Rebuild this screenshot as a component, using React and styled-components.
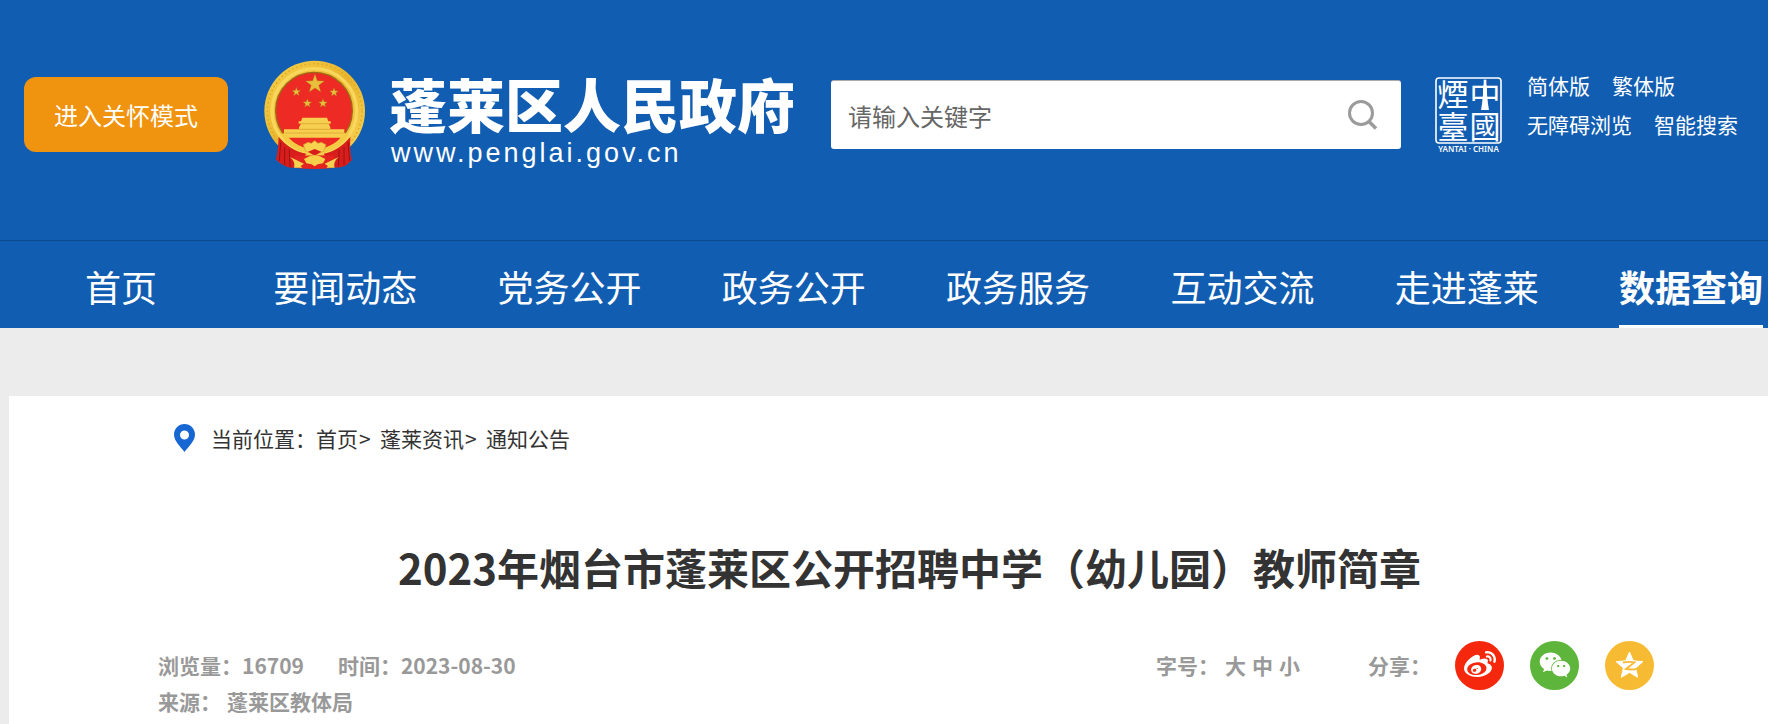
import React from "react";
import styled, { createGlobalStyle } from "styled-components";
import { FaWeibo, FaWeixin } from "react-icons/fa";

const GlobalStyle = createGlobalStyle`
  * { box-sizing: border-box; }
  body {
    margin: 0;
    background: #ececec;
    color: #333;
    font-family: "Noto Sans CJK SC", sans-serif;
  }
  a { color: inherit; text-decoration: none; }
  button, input { font: inherit; border: 0; margin: 0; }
  button { cursor: pointer; }
`;

const Page = styled.div`
  min-height: 100vh;
  display: flex;
  flex-direction: column;
  overflow-x: hidden;
`;

const Header = styled.header`
  height: 240px;
  padding: 0 30px 11px 24px;
  display: flex;
  align-items: center;
  background: #115db2;
  color: #fff;
`;

const CareButton = styled.button`
  flex: none;
  width: 204px;
  height: 75px;
  border-radius: 12px;
  background: #f0930f;
  color: #fff;
  font-size: 24px;
`;

const Brand = styled.a`
  flex: none;
  display: flex;
  align-items: center;
  gap: 23px;
  margin: 0 36px 0 36px;
`;

const BrandText = styled.span`
  display: flex;
  flex-direction: column;
  padding-top: 8px;
`;

const SiteName = styled.span`
  font-size: 58px;
  line-height: 68px;
  font-weight: 900;
`;

const SiteUrl = styled.span`
  padding-left: 2px;
  font-family: "Liberation Sans", sans-serif;
  font-size: 27px;
  line-height: 32px;
  letter-spacing: 3px;
`;

const Search = styled.form`
  flex: 1;
  min-width: 0;
  height: 69px;
  display: flex;
  align-items: center;
  padding: 0 20px 0 17px;
  border-top: 1px solid #aaa;
  border-radius: 3px;
  background: #fff;
`;

const SearchInput = styled.input`
  flex: 1;
  min-width: 0;
  height: 60px;
  padding: 0;
  outline: none;
  background: transparent;
  font-size: 24px;
  color: #666;
  &::placeholder { color: #666; opacity: 1; }
`;

const SearchButton = styled.button`
  display: flex;
  padding: 2px;
  background: transparent;
`;

const Seal = styled.svg`
  flex: none;
  margin: 0 25px 0 34px;
`;

const Tools = styled.nav`
  flex: none;
  display: grid;
  row-gap: 9px;
  padding-bottom: 20px;
  font-size: 21px;
  line-height: 30px;
`;

const ToolRow = styled.div`
  display: flex;
  gap: 22px;
`;

const MainNav = styled.nav`
  height: 88px;
  padding: 0 5px 0 49px;
  display: flex;
  justify-content: space-between;
  border-top: 1px solid #0d4a8e;
  background: #115db2;
`;

const NavLink = styled.a`
  min-width: 144px;
  padding-top: 8px;
  border-bottom: 3px solid ${(p) => (p.$active ? "#fff" : "transparent")};
  color: #fff;
  font-size: 36px;
  line-height: 74px;
  font-weight: ${(p) => (p.$active ? 700 : 400)};
  text-align: center;
  white-space: nowrap;
`;

const Article = styled.main`
  flex: 1;
  margin: 68px 0 0 9px;
  padding: 28px 107px 4px 149px;
  background: #fff;
`;

const Breadcrumb = styled.nav`
  height: 28px;
  padding-left: 16px;
  display: flex;
  align-items: center;
  font-size: 21px;
  line-height: 28px;
  svg { margin-right: 16px; }
`;

const Separator = styled.span`
  width: 22px;
  padding-left: 1px;
`;

const Title = styled.h1`
  margin: 85px 0 44px;
  font-size: 42px;
  line-height: 60px;
  font-weight: 700;
  text-align: center;
`;

const Meta = styled.div`
  display: flex;
  justify-content: space-between;
  padding-right: 7px;
  color: #999;
  font-size: 21px;
  line-height: 36px;
  font-weight: 700;
`;

const Facts = styled.div`
  padding-top: 6px;
`;

const FactRow = styled.div`
  display: flex;
  gap: ${(p) => p.$gap}px;
`;

const Actions = styled.div`
  display: flex;
  align-items: center;
  height: 48px;
`;

const Sizes = styled.div`
  display: flex;
  gap: 6px;
  margin: 0 68px 0 6px;
`;

const SizeButton = styled.button`
  padding: 0;
  background: transparent;
  color: inherit;
`;

const Shares = styled.div`
  display: flex;
  gap: 26px;
  margin-left: 24px;
`;

const ShareLink = styled.a`
  width: 49px;
  height: 49px;
  display: flex;
  align-items: center;
  justify-content: center;
  border-radius: 50%;
  background: ${(p) => p.$color};
  color: #fff;
`;

const star = (cx, cy, r, k = 0.4) =>
  Array.from({ length: 10 }, (_, i) => {
    const a = (Math.PI * i) / 5 - Math.PI / 2;
    const d = i % 2 ? r * k : r;
    return `${(cx + d * Math.cos(a)).toFixed(1)},${(cy + d * Math.sin(a)).toFixed(1)}`;
  }).join(" ");

function Emblem() {
  return (
    <svg width="102" height="110" viewBox="42 31 306 330" role="img" aria-label="国徽">
      <defs>
        <linearGradient id="gold" x1="0" y1="0" x2="1" y2="1">
          <stop offset="0" stopColor="#f7d24c" />
          <stop offset=".5" stopColor="#e9b52c" />
          <stop offset="1" stopColor="#f8d75a" />
        </linearGradient>
      </defs>
      <circle cx="194" cy="184" r="151" fill="url(#gold)" />
      <circle cx="194" cy="184" r="142" fill="none" stroke="#dfa62c" strokeWidth="4" strokeDasharray="5 8" />
      <circle cx="193" cy="184" r="127" fill="none" stroke="#f9d75c" strokeWidth="10" />
      <circle cx="192" cy="183" r="115" fill="#ee2a24" stroke="#9d6718" strokeWidth="4" />
      <g fill="#e8bf3a" stroke="#a86b1a" strokeWidth="1">
        <polygon points={star(195, 103, 30)} />
        <polygon points={star(139, 127, 14)} />
        <polygon points={star(252, 128, 14)} />
        <polygon points={star(172, 161, 14)} />
        <polygon points={star(219, 161, 14)} />
      </g>
      <g fill="#f6cf4e">
        <path d="M157 204h74l4 11h7v7h-6l5 11v6h42v25H102v-25h45v-6l6-11h-7v-7h7z" />
        <path d="M147 222h94M144 239h99M104 250h178" stroke="#d99a2c" strokeWidth="2" />
      </g>
      <path d="M106 265h176c-8 16-22 26-40 33l-48 12-50-13c-18-8-30-18-38-32z" fill="#ed2923" />
      <path d="M86 262c22 26 48 44 83 50l-30 41c-20 4-30-2-44-9l-17-14c5-23 7-44 8-68zM301 262c-22 26-47 44-80 50l28 41c20 2 31-2 42-8l14-13c-5-25-5-47-4-70z" fill="#d81e1c" />
      <path d="M92 278l-4 56M104 292l0 54M118 300l2 52M294 278l5 56M282 292l0 54M268 300l-3 50" stroke="#9c1115" strokeWidth="3" />
      <path d="M133 318l120-1-4 38c-38 4-76 4-110 0z" fill="#e3231f" />
      <path d="M92 254c18 32 46 50 84 58l18 4 18-4c38-8 68-26 84-58l-14-4c-18 28-42 42-76 48l-12 5-12-5c-34-6-58-20-76-48z" fill="#f5cb43" />
      <path d="M160 285l14-7 10 3 10-8 10 8 10-3 14 7-7 20-27 9-27-9z" fill="#f8d24f" stroke="#d19b2d" strokeWidth="2" />
      <path d="M174 306l20-8 20 8-20 12z" fill="#d81e1c" />
      <path d="M162 328l16-8 16-4 16 4 16 8-7 13-16 3-9 6-9-6-16-3z" fill="#f7cf49" />
      <path d="M120 322l42 20-10 7 5 5h-25c4-13-2-23-12-32zM266 322l-42 20 10 7-5 5h25c-4-13 2-23 12-32z" fill="#f3d34f" />
    </svg>
  );
}

function SealMark() {
  return (
    <Seal width="67" height="92" viewBox="0 -8 67 92" role="img" aria-label="烟台 中国">
      <rect x="1" y="1" width="65" height="65" rx="3" fill="none" stroke="#fff" strokeWidth="1.6" />
      <g fill="#fff" fontFamily="'Noto Sans CJK TC', sans-serif" fontSize="31" textAnchor="middle">
        <text x="18" y="29">煙</text>
        <text x="18" y="61">臺</text>
        <text x="50" y="29">中</text>
        <text x="50" y="61">國</text>
      </g>
      <path d="M50 3l1 4 1 3v7l1 10 1 6h-8l1-6 1-10v-7l1-3z" fill="#fff" />
      <text x="33.5" y="75" fill="#fff" fontFamily="'Noto Sans', sans-serif" fontSize="8" fontWeight="600" textAnchor="middle">
        YANTAI · CHINA
      </text>
    </Seal>
  );
}

const NAV = ["首页", "要闻动态", "党务公开", "政务公开", "政务服务", "互动交流", "走进蓬莱", "数据查询"];

export default function App() {
  return (
    <Page>
      <GlobalStyle />
      <Header>
        <CareButton type="button">进入关怀模式</CareButton>
        <Brand href="#">
          <Emblem />
          <BrandText>
            <SiteName>蓬莱区人民政府</SiteName>
            <SiteUrl>www.penglai.gov.cn</SiteUrl>
          </BrandText>
        </Brand>
        <Search onSubmit={(e) => e.preventDefault()}>
          <SearchInput type="text" aria-label="请输入关键字" placeholder="请输入关键字" />
          <SearchButton type="submit" aria-label="搜索">
            <svg width="32" height="32" viewBox="0 0 32 32" fill="none" stroke="#9b9b9b" strokeWidth="3">
              <circle cx="14" cy="14" r="11.5" />
              <path d="M21.5 22l7.5 7.5" strokeWidth="3.6" />
            </svg>
          </SearchButton>
        </Search>
        <SealMark />
        <Tools aria-label="工具">
          <ToolRow>
            <a href="#">简体版</a>
            <a href="#">繁体版</a>
          </ToolRow>
          <ToolRow>
            <a href="#">无障碍浏览</a>
            <a href="#">智能搜索</a>
          </ToolRow>
        </Tools>
      </Header>
      <MainNav aria-label="主导航">
        {NAV.map((name) => (
          <NavLink key={name} href="#" $active={name === "数据查询"}>
            {name}
          </NavLink>
        ))}
      </MainNav>
      <Article>
        <Breadcrumb aria-label="当前位置">
          <svg width="21" height="28" viewBox="0 0 21 28">
            <path
              fillRule="evenodd"
              fill="#1767d2"
              d="M10.5 0C4.700 0 0 4.700 0 10.500 0 17 6 22 10.500 28 15 22 21 17 21 10.500 21 4.700 16.300 0 10.500 0zm0 6.500a4.500 4.500 0 1 1 0 9 4.500 4.500 0 0 1 0-9z"
            />
          </svg>
          <span>当前位置：</span>
          <a href="#">首页</a>
          <Separator>&gt;</Separator>
          <a href="#">蓬莱资讯</a>
          <Separator>&gt;</Separator>
          <a href="#">通知公告</a>
        </Breadcrumb>
        <Title>2023年烟台市蓬莱区公开招聘中学（幼儿园）教师简章</Title>
        <Meta>
          <Facts>
            <FactRow $gap={34}>
              <span>浏览量：16709</span>
              <span>时间：2023-08-30</span>
            </FactRow>
            <FactRow $gap={6}>
              <span>来源：</span>
              <span>蓬莱区教体局</span>
            </FactRow>
          </Facts>
          <Actions>
            <span>字号：</span>
            <Sizes>
              <SizeButton type="button">大</SizeButton>
              <SizeButton type="button">中</SizeButton>
              <SizeButton type="button">小</SizeButton>
            </Sizes>
            <span>分享：</span>
            <Shares>
              <ShareLink href="#" aria-label="微博" $color="#f5270d">
                <FaWeibo size={32} />
              </ShareLink>
              <ShareLink href="#" aria-label="微信" $color="#5eb53b">
                <FaWeixin size={32} />
              </ShareLink>
              <ShareLink href="#" aria-label="QQ空间" $color="#f6bb32">
                <svg width="29" height="28" viewBox="0 0 29 28">
                  <polygon
                    points={star(14.5, 15, 14, 0.46)}
                    fill="#fff"
                    stroke="#fff"
                    strokeWidth="1"
                    strokeLinejoin="round"
                  />
                  <path
                    d="M8 11.500c4-.8 8-.8 11.500-.2L11 18c4 .7 8 .7 12-.4"
                    fill="none"
                    stroke="#f6bb32"
                    strokeWidth="1.800"
                  />
                </svg>
              </ShareLink>
            </Shares>
          </Actions>
        </Meta>
      </Article>
    </Page>
  );
}
